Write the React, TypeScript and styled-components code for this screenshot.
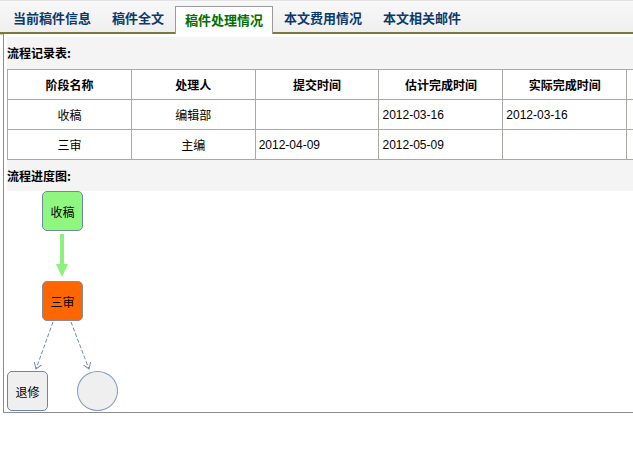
import React from 'react';
import styled, { createGlobalStyle } from 'styled-components';

const GlobalStyle = createGlobalStyle`
  html, body {
    margin: 0;
    padding: 0;
    background: #ffffff;
    font-family: "Noto Sans CJK SC", "Liberation Sans", sans-serif;
    font-size: 12px;
    color: #000;
  }
`;

const Page = styled.div`
  width: 633px;
  overflow: hidden;
`;

const TabBar = styled.div`
  display: flex;
  align-items: flex-end;
  gap: 1px;
  height: 31px;
  padding-left: 3px;
  background: linear-gradient(#f8f8f8, #efefef);
  border-top: 1px solid #e2e2e2;
  border-bottom: 2px solid #7a7a3a;
  box-shadow: 0 1px 0 #c8c8a8;
`;

const Tab = styled.div<{ $active?: boolean }>`
  height: 27px;
  line-height: 25px;
  padding: 0 ${({ $active }) => ($active ? '9px' : '10px')};
  margin-bottom: ${({ $active }) => ($active ? '-2px' : '0')};
  font-size: 13px;
  font-weight: bold;
  white-space: nowrap;
  color: ${({ $active }) => ($active ? '#007000' : '#0a3a6a')};
  background: ${({ $active }) => ($active ? '#ffffff' : 'transparent')};
  border: ${({ $active }) => ($active ? '1px solid #9a9a9a' : 'none')};
  border-bottom: none;
`;

const Panel = styled.div`
  margin: 0 0 0 3px;
  padding: 3px 0 0 3px;
  border-left: 1px solid #8c8c8c;
  border-bottom: 1px solid #8c8c8c;
  width: 760px;
  background: #ffffff;
`;

const Inner = styled.div`
  background: #f4f4f4;
`;

const Label = styled.div<{ $h: number }>`
  height: ${({ $h }) => $h}px;
  line-height: ${({ $h }) => $h}px;
  font-weight: bold;
  font-size: 12px;
`;

const Table = styled.table`
  width: 744px;
  border-collapse: collapse;
  background: #ffffff;
  table-layout: fixed;
`;

const Th = styled.th`
  height: 29px;
  border: 1px solid #a9a9a3;
  font-weight: bold;
  font-size: 12px;
  text-align: center;
  padding: 0;
`;

const Td = styled.td<{ $center?: boolean }>`
  height: 29px;
  border: 1px solid #a9a9a3;
  font-size: 12px;
  text-align: ${({ $center }) => ($center ? 'center' : 'left')};
  padding: 0 3px;
  font-family: "Liberation Sans", "Noto Sans CJK SC", sans-serif;
`;

const Canvas = styled.div`
  position: relative;
  height: 221px;
  background: #ffffff;
`;

const Node = styled.div<{ $x: number; $y: number; $bg: string; $border: string; $round?: boolean }>`
  position: absolute;
  left: ${({ $x }) => $x}px;
  top: ${({ $y }) => $y}px;
  width: 39px;
  height: 38px;
  display: flex;
  align-items: center;
  justify-content: center;
  background: ${({ $bg }) => $bg};
  border: 1px solid ${({ $border }) => $border};
  border-radius: ${({ $round }) => ($round ? '50%' : '5px')};
  font-size: 12px;
`;

const Lines = styled.svg`
  position: absolute;
  left: 0;
  top: 0;
`;

const headers = ['阶段名称', '处理人', '提交时间', '估计完成时间', '实际完成时间', ''];
const rows = [
  ['收稿', '编辑部', '', '2012-03-16', '2012-03-16', ''],
  ['三审', '主编', '2012-04-09', '2012-05-09', '', ''],
];

export default function App() {
  return (
    <Page>
      <GlobalStyle />
      <TabBar>
        <Tab>当前稿件信息</Tab>
        <Tab>稿件全文</Tab>
        <Tab $active>稿件处理情况</Tab>
        <Tab>本文费用情况</Tab>
        <Tab>本文相关邮件</Tab>
      </TabBar>
      <Panel>
        <Inner>
          <Label $h={32}>流程记录表:</Label>
          <Table>
            <thead>
              <tr>
                {headers.map((h, i) => (
                  <Th key={i}>{h}</Th>
                ))}
              </tr>
            </thead>
            <tbody>
              {rows.map((r, i) => (
                <tr key={i}>
                  {r.map((c, j) => (
                    <Td key={j} $center={j < 2}>
                      {c}
                    </Td>
                  ))}
                </tr>
              ))}
            </tbody>
          </Table>
          <Label $h={31}>流程进度图:</Label>
          <Canvas>
            <Lines width="200" height="221">
              <defs>
                <marker id="dash-arrow" markerWidth="8" markerHeight="8" refX="6" refY="4" orient="auto">
                  <path d="M0,0 L6,4 L0,8" fill="none" stroke="#7088bb" strokeWidth="1" />
                </marker>
              </defs>
              <line x1="55" y1="43" x2="55" y2="74" stroke="#8cf27c" strokeWidth="4" />
              <polygon points="49,73 61,73 55,86" fill="#8cf27c" />
              <line x1="46" y1="131" x2="29" y2="178" stroke="#7088bb" strokeWidth="1" strokeDasharray="4,2" markerEnd="url(#dash-arrow)" />
              <line x1="64" y1="131" x2="82" y2="178" stroke="#7088bb" strokeWidth="1" strokeDasharray="4,2" markerEnd="url(#dash-arrow)" />
            </Lines>
            <Node $x={35} $y={0} $bg="#8ff77f" $border="#6b8c9a">收稿</Node>
            <Node $x={35} $y={90} $bg="#ff6600" $border="#8a8a9a">三审</Node>
            <Node $x={0} $y={180} $bg="#efefef" $border="#7282aa">退修</Node>
            <Node $x={70} $y={180} $bg="#efefef" $border="#8898c0" $round />
          </Canvas>
        </Inner>
      </Panel>
    </Page>
  );
}
